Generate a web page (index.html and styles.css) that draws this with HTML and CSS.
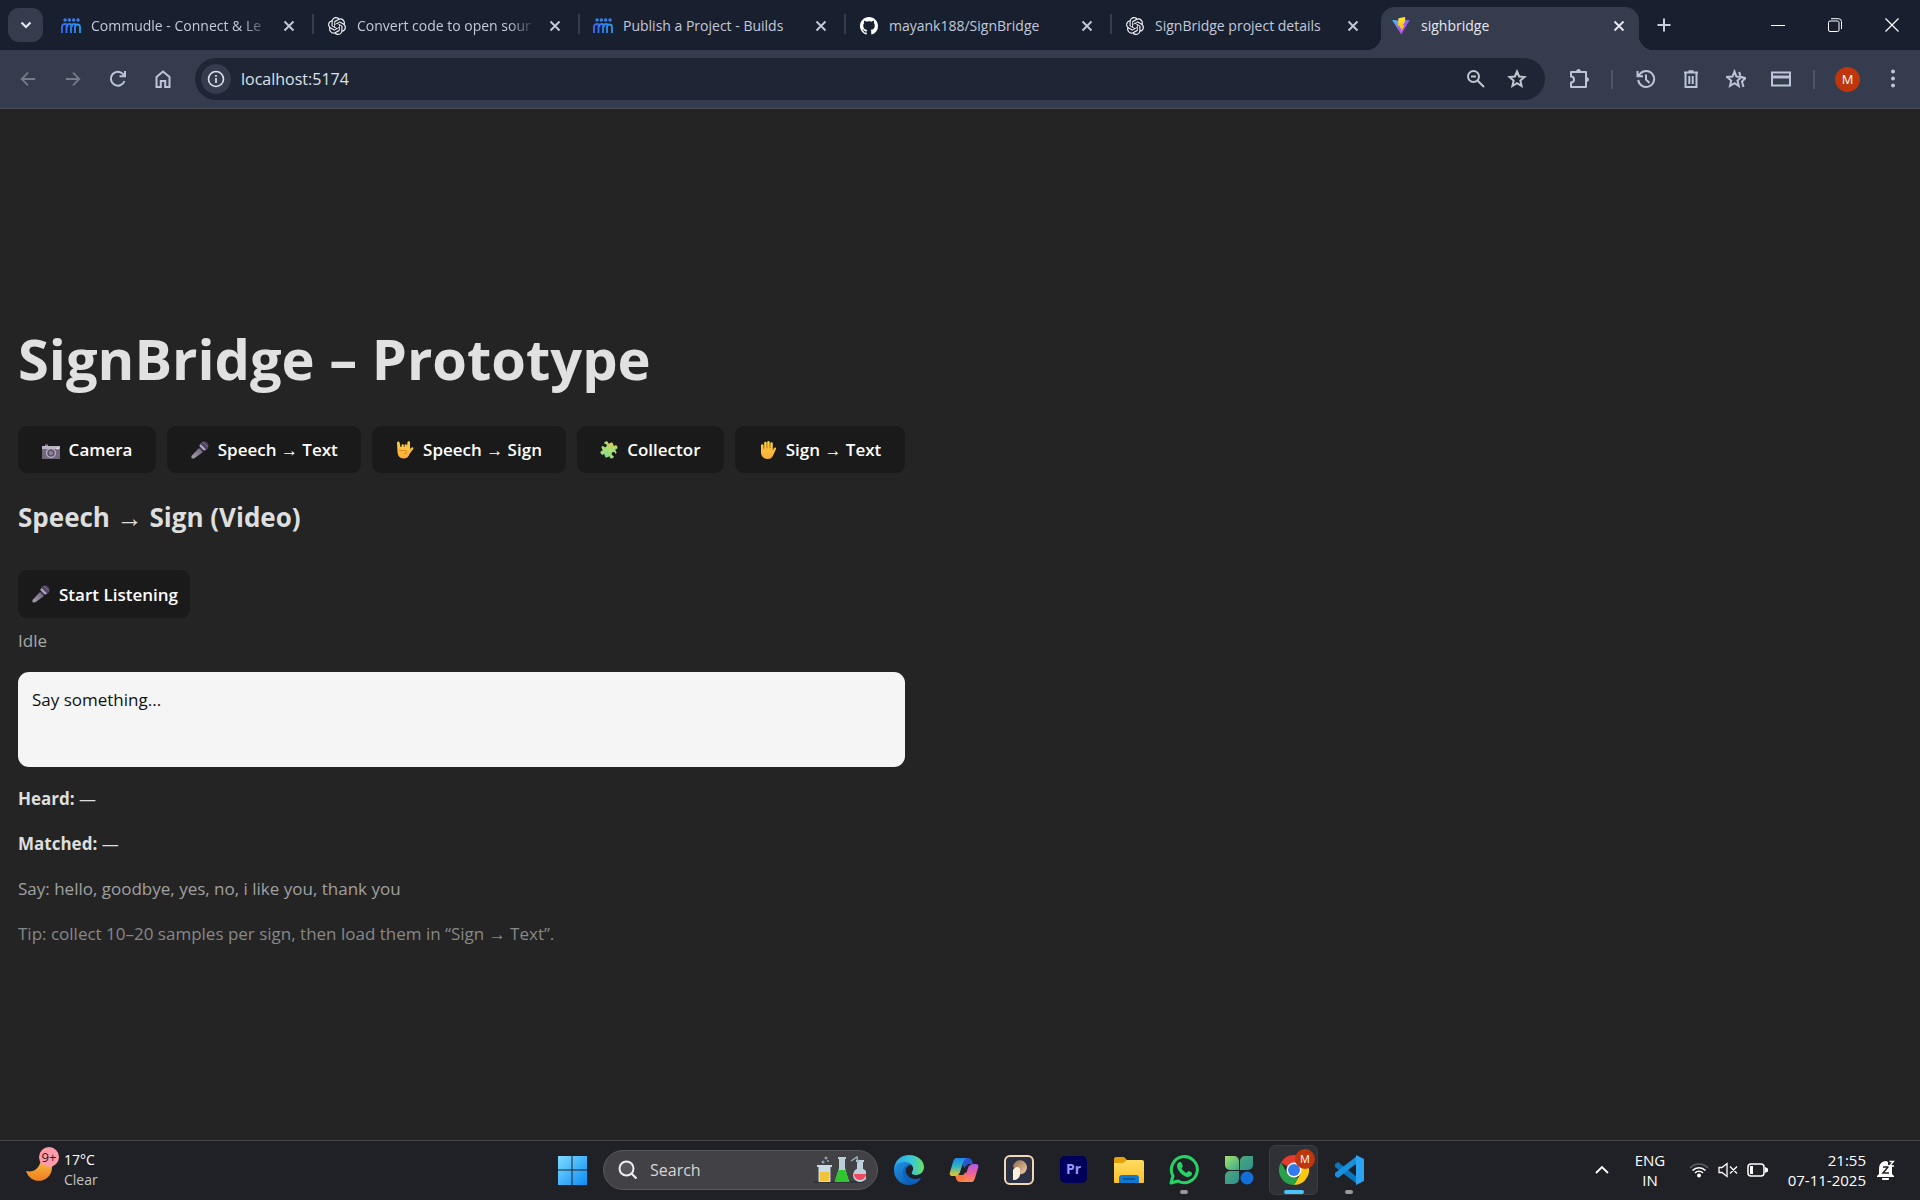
FILE: index.html
```html
<!DOCTYPE html>
<html lang="en">
<head>
<meta charset="utf-8">
<meta name="viewport" content="width=device-width, initial-scale=1">
<title>sighbridge</title>
<link rel="stylesheet" href="styles.css">
</head>
<body>
<svg class="defs" width="0" height="0" aria-hidden="true">
  <defs>
    <linearGradient id="g-people" x1="0" x2="1"><stop offset="0" stop-color="#4468f2"/><stop offset="1" stop-color="#1f9bf0"/></linearGradient>
    <linearGradient id="g-mic" x1="0" y1="1" x2="1" y2="0"><stop offset="0" stop-color="#a9a1ac"/><stop offset="1" stop-color="#6d6078"/></linearGradient>
    <linearGradient id="g-hand" x1="0" y1="0" x2="0" y2="1"><stop offset="0" stop-color="#ffd23c"/><stop offset="1" stop-color="#fbab3a"/></linearGradient>
    <symbol id="people" viewBox="0 0 20 16">
      <g fill="url(#g-people)"><circle cx="4" cy="2" r="1.7"/><circle cx="8.300" cy="2" r="1.700"/><circle cx="12.600" cy="2" r="1.700"/><circle cx="17" cy="2" r="1.700"/></g>
      <path d="M1 15V9a3 3 0 0 1 5.500-1.600M5.500 15V9a3 3 0 0 1 5.500-1.600M10 15V9a3 3 0 0 1 5.500-1.600M14 15V9a2.500 2.500 0 0 1 5 0v6M4.500 6a3 3 0 0 1 2 3M9 6a3 3 0 0 1 2 3" fill="none" stroke="url(#g-people)" stroke-width="1.800"/>
    </symbol>
    <symbol id="gpt" viewBox="0 0 24 24">
      <path fill="#f1f1f4" d="M22.282 9.821a5.985 5.985 0 0 0-.516-4.910 6.046 6.046 0 0 0-6.510-2.900A6.065 6.065 0 0 0 4.981 4.182a5.985 5.985 0 0 0-3.998 2.900 6.046 6.046 0 0 0 .743 7.097 5.980 5.980 0 0 0 .510 4.911 6.051 6.051 0 0 0 6.515 2.900A5.985 5.985 0 0 0 13.260 24a6.056 6.056 0 0 0 5.772-4.206 5.990 5.990 0 0 0 3.998-2.900 6.056 6.056 0 0 0-.748-7.073zM13.260 22.430a4.476 4.476 0 0 1-2.876-1.041l.141-.080 4.779-2.758a.795.795 0 0 0 .393-.681v-6.737l2.020 1.169a.071.071 0 0 1 .038.052v5.583a4.504 4.504 0 0 1-4.495 4.493zM3.600 18.304a4.471 4.471 0 0 1-.535-3.014l.142.085 4.783 2.759a.771.771 0 0 0 .780 0l5.843-3.369v2.332a.080.080 0 0 1-.033.062L9.740 19.950a4.499 4.499 0 0 1-6.140-1.646zM2.340 7.896a4.485 4.485 0 0 1 2.366-1.973V11.600a.766.766 0 0 0 .388.677l5.815 3.354-2.020 1.169a.076.076 0 0 1-.071 0l-4.830-2.787A4.504 4.504 0 0 1 2.340 7.872zm16.597 3.855-5.833-3.387L15.119 7.200a.076.076 0 0 1 .071 0l4.830 2.791a4.494 4.494 0 0 1-.676 8.105v-5.678a.790.790 0 0 0-.407-.667zm2.010-3.023-.141-.085-4.774-2.782a.776.776 0 0 0-.785 0L9.409 9.230V6.897a.066.066 0 0 1 .028-.061l4.830-2.787a4.499 4.499 0 0 1 6.680 4.660zM8.307 12.863l-2.020-1.164a.080.080 0 0 1-.038-.057V6.075a4.499 4.499 0 0 1 7.375-3.454l-.142.080L8.704 5.459a.795.795 0 0 0-.393.681zm1.097-2.365 2.602-1.500 2.607 1.500v2.999l-2.597 1.500-2.607-1.500z"/>
    </symbol>
    <symbol id="cross" viewBox="0 0 12 12"><path d="M1.500 1.500l9 9M10.500 1.500l-9 9" stroke="currentColor" stroke-width="1.900"/></symbol>
    <symbol id="mic" viewBox="0 0 18 18">
      <path fill="url(#g-mic)" d="M8 7l4 4-9 6.500-2.500-.200V15z"/>
      <circle cx="13" cy="5" r="4.500" fill="#51445f"/><path d="M9 4l5 5" stroke="#b9aac9" stroke-width="2"/><path d="M12 1l5 5" stroke="#7a6b8b" stroke-width="1"/>
    </symbol>
  </defs>
</svg>

<header class="browser">
  <div class="tabstrip">
    <button class="tab-search" aria-label="Search tabs"><svg width="12" height="8" viewBox="0 0 12 8"><path d="M1.500 1.500L6 6l4.500-4.500" fill="none" stroke="#e4e7f0" stroke-width="2.200"/></svg></button>
    <div class="tab"><svg class="favicon"><use href="#people"/></svg><span class="tab-title fade">Commudle - Connect &amp; Le</span><button class="tab-close" aria-label="Close tab"><svg><use href="#cross"/></svg></button></div>
    <div class="tab"><svg class="favicon"><use href="#gpt"/></svg><span class="tab-title fade">Convert code to open sour</span><button class="tab-close" aria-label="Close tab"><svg><use href="#cross"/></svg></button></div>
    <div class="tab"><svg class="favicon"><use href="#people"/></svg><span class="tab-title">Publish a Project - Builds</span><button class="tab-close" aria-label="Close tab"><svg><use href="#cross"/></svg></button></div>
    <div class="tab"><svg class="favicon" viewBox="0 0 16 16"><path fill="#fff" d="M8 0C3.580 0 0 3.580 0 8c0 3.540 2.290 6.530 5.470 7.590.400.070.550-.170.550-.380 0-.190-.010-.820-.010-1.490-2.010.370-2.530-.490-2.690-.940-.090-.230-.480-.940-.820-1.130-.280-.150-.680-.520-.010-.530.630-.010 1.080.580 1.230.820.720 1.210 1.870.870 2.330.660.070-.520.280-.870.510-1.070-1.780-.200-3.640-.890-3.640-3.950 0-.870.310-1.590.820-2.150-.080-.200-.360-1.020.080-2.120 0 0 .670-.210 2.200.820.640-.180 1.320-.270 2-.270s1.360.090 2 .270c1.530-1.040 2.200-.820 2.200-.820.440 1.100.160 1.920.080 2.120.510.560.820 1.270.820 2.150 0 3.070-1.870 3.750-3.650 3.950.290.250.540.730.540 1.480 0 1.070-.010 1.930-.010 2.200 0 .210.150.460.550.380A8.010 8.010 0 0 0 16 8c0-4.420-3.580-8-8-8z"/></svg><span class="tab-title">mayank188/SignBridge</span><button class="tab-close" aria-label="Close tab"><svg><use href="#cross"/></svg></button></div>
    <div class="tab"><svg class="favicon"><use href="#gpt"/></svg><span class="tab-title">SignBridge project details</span><button class="tab-close" aria-label="Close tab"><svg><use href="#cross"/></svg></button></div>
    <div class="tab active"><svg class="favicon" viewBox="0 0 32 32"><defs><linearGradient id="v1" x2="1" y2="1"><stop offset="0" stop-color="#41d1ff"/><stop offset=".6" stop-color="#a145f5"/><stop offset="1" stop-color="#bd34fe"/></linearGradient><linearGradient id="v2" x2="0" y2="1"><stop offset="0" stop-color="#ffea3c"/><stop offset="1" stop-color="#ffa800"/></linearGradient></defs><path fill="url(#v1)" d="M.300 5.500l14 1L31.600 5.500 16.500 31.500z"/><path fill="url(#v2)" d="M23 0L11.500 2.300l-.900 14 3.800-.900-.900 5 3-.900-1.700 8.800L23 14.500l-4 .800 4.600-8.800z"/></svg><span class="tab-title">sighbridge</span><button class="tab-close" aria-label="Close tab"><svg><use href="#cross"/></svg></button></div>
    <button class="new-tab" aria-label="New tab"><svg width="14" height="14" viewBox="0 0 14 14"><path d="M7 .500v13M.500 7h13" stroke="#c7cce0" stroke-width="2"/></svg></button>
    <div class="window-controls">
      <button aria-label="Minimize"><svg width="14" height="14" viewBox="0 0 14 14"><path d="M0 7.500h14" stroke="#fff"/></svg></button>
      <button aria-label="Restore"><svg width="14" height="14" viewBox="0 0 14 14"><rect x=".5" y="3" width="10.500" height="10.500" rx="1.500" fill="none" stroke="#fff"/><path d="M3 .700h7.500a3 3 0 0 1 3 3V11" fill="none" stroke="#fff"/></svg></button>
      <button aria-label="Close"><svg width="14" height="14" viewBox="0 0 14 14"><path d="M.500.500l13 13M13.500.500l-13 13" stroke="#fff" stroke-width="1.200"/></svg></button>
    </div>
  </div>

  <div class="toolbar">
    <button class="tool dim" aria-label="Back"><svg viewBox="0 0 20 20"><path d="M18 10H3M10 3l-7 7 7 7"/></svg></button>
    <button class="tool dim" aria-label="Forward"><svg viewBox="0 0 20 20"><path d="M2 10h15M10 3l7 7-7 7"/></svg></button>
    <button class="tool" aria-label="Reload"><svg viewBox="0 0 20 20"><path d="M16.500 12A7 7 0 1 1 15.500 5.500L17 7M17 2v5.200h-5.500"/></svg></button>
    <button class="tool" aria-label="Home"><svg viewBox="0 0 20 20"><path d="M3.500 8v10h4.300v-6h4.400v6h4.300V8L10 2.500z"/></svg></button>
    <div class="omnibox">
      <button class="site-info" aria-label="Site information"><svg width="18" height="18" viewBox="0 0 18 18"><circle cx="9" cy="9" r="7.500" fill="none" stroke="#dfe2ec" stroke-width="1.600"/><path d="M9 8v5M9 5v1.800" stroke="#dfe2ec" stroke-width="1.700"/></svg></button>
      <input class="url" type="text" value="localhost:5174" aria-label="Address">
      <button class="omni-btn" aria-label="Zoom"><svg viewBox="0 0 20 20"><circle cx="7.500" cy="7.500" r="5.500"/><path d="M5 7.500h5M11.500 11.500l6.500 6.500"/></svg></button>
      <button class="omni-btn" aria-label="Bookmark this tab"><svg viewBox="0 0 20 20"><path d="M10 2.500l2.100 5 5.400.500-4.100 3.600 1.200 5.400L10 14.200 5.400 17l1.200-5.400L2.500 8l5.400-.500z"/></svg></button>
    </div>
    <button class="tool" aria-label="Extensions"><svg viewBox="0 0 20 20"><path d="M2 3h15v15H2v-4.500a3 3 0 0 0 0-6z" stroke-linejoin="round"/><path d="M7.500 2.500a2 2 0 0 1 4 0zM17.500 8.500a2 2 0 0 1 0 4z" fill="currentColor" stroke-width="1"/></svg></button>
    <span class="divider"></span>
    <button class="tool" aria-label="History"><svg viewBox="0 0 20 20"><path d="M2.200 11A8 8 0 1 0 4 4.800L2 7M1.500 2v5.300H7M10 5.500v5l3.500 3.500"/></svg></button>
    <button class="tool" aria-label="Delete browsing data"><svg viewBox="0 0 20 20"><path d="M3 3.500h14M7.500 2.200h5M4.500 4v14h11V4M8.300 7v8M11.700 7v8"/></svg></button>
    <button class="tool" aria-label="Bookmarks"><svg viewBox="0 0 20 20"><path d="M8.500 2.500l1.900 5 5.100.500-4 3.600 1.300 5.400-4.300-2.800L4 17l1.200-5.400L1 8l5.500-.500zM13 3l1.500 3.500M16 8.500l3.500.500-3.500 3.500 1.500 5.500"/></svg></button>
    <button class="tool" aria-label="Payment methods"><svg viewBox="0 0 20 20"><path d="M1 3.500h18v13H1z"/><path d="M1 8h18" stroke-width="3"/></svg></button>
    <span class="divider"></span>
    <button class="tool" aria-label="Profile"><span class="avatar">M</span></button>
    <button class="tool" aria-label="Menu"><svg viewBox="0 0 20 20"><g fill="currentColor" stroke="none"><circle cx="10" cy="2.500" r="2"/><circle cx="10" cy="9.500" r="2"/><circle cx="10" cy="16.500" r="2"/></g></svg></button>
  </div>
</header>

<main class="page">
  <div class="app">
    <h1>SignBridge – Prototype</h1>
    <nav class="modes">
      <button class="btn"><svg class="emoji" viewBox="0 0 18 18"><path fill="#bcb3c4" d="M0 5h18v4H0z"/><path fill="#736879" d="M0 8h18v10H0z"/><path fill="#8e8398" d="M3 3.500h3V5H3z"/><circle cx="9" cy="12" r="5" fill="#c1b8ca"/><circle cx="9" cy="12" r="3.800" fill="#5b5168"/><circle cx="9" cy="12" r="2.200" fill="#8a7e98"/><circle cx="15.500" cy="7.500" r="1" fill="#eee"/></svg>Camera</button>
      <button class="btn"><svg class="emoji"><use href="#mic"/></svg>Speech → Text</button>
      <button class="btn"><svg class="emoji" viewBox="0 0 18 18"><path fill="url(#g-hand)" d="M1 2a1.300 1.300 0 0 1 2.600-.300L4.500 6h1V4.500a1.200 1.200 0 0 1 2.400 0V6h.600V4.500a1.200 1.200 0 0 1 2.400 0V6l.600-4.500a1.200 1.200 0 0 1 2.500.100V8l1.600-1.500c1-1 2.400.400 1.600 1.500L13.500 13c-1 3-3 4.500-6 4.500C3.500 17.500 1.500 14 1.500 11z"/><path d="M3.500 9.500h6.500a2 2 0 0 1 0 3H8" stroke="#d98b24" fill="none"/></svg>Speech → Sign</button>
      <button class="btn"><svg class="emoji" viewBox="0 0 18 18"><defs><linearGradient id="g-puz" x1="1" y1="0" x2="0" y2="1"><stop offset="0" stop-color="#e5c84a"/><stop offset=".5" stop-color="#a6df79"/><stop offset="1" stop-color="#7ed98b"/></linearGradient></defs><g transform="rotate(-22 9 9)" fill="url(#g-puz)"><rect x="3" y="3" width="12" height="12" rx="1"/><circle cx="9" cy="1.800" r="2"/><circle cx="16" cy="9" r="2"/><circle cx="2" cy="9" r="2"/><circle cx="9" cy="16" r="2"/></g><g fill="#1a1a1a"><circle cx="5" cy="4.500" r="1.700"/><circle cx="13.500" cy="12.800" r="1.900"/></g></svg>Collector</button>
      <button class="btn"><svg class="emoji" viewBox="0 0 18 18"><path fill="url(#g-hand)" d="M2 4.500a1.200 1.200 0 0 1 2.400 0l.100 3h.700V2a1.200 1.200 0 0 1 2.500 0v5h.500V1.200a1.200 1.200 0 0 1 2.500 0V7h.600V2.500a1.200 1.200 0 0 1 2.500 0V9.500L15 7c.900-1.200 2.500-.400 2 1L14 14.500C13 17 11.500 18 8.500 18 5 18 2 15.500 2 11.500z"/><path d="M4.800 4v5M8 3v5.500M11 3.500v5" stroke="#e99b2b" stroke-width=".8"/></svg>Sign → Text</button>
    </nav>
    <h2>Speech → Sign (Video)</h2>
    <button class="btn listen"><svg class="emoji"><use href="#mic"/></svg>Start Listening</button>
    <p class="status">Idle</p>
    <div class="transcript">Say something...</div>
    <p><strong>Heard:</strong> —</p>
    <p><strong>Matched:</strong> —</p>
    <p class="hint">Say: hello, goodbye, yes, no, i like you, thank you</p>
    <p class="tip">Tip: collect 10–20 samples per sign, then load them in “Sign → Text”.</p>
  </div>
</main>

<footer class="taskbar">
  <button class="weather">
    <span class="weather-icon"><svg width="30" height="30" viewBox="0 0 30 30"><defs><linearGradient id="moon" x2="0" y2="1"><stop offset="0" stop-color="#f8c444"/><stop offset="1" stop-color="#f07c1e"/></linearGradient></defs><path fill="url(#moon)" d="M1 16c7 2 14-2 15-12 8-3 12 3 11 9-1 15-21 18-26 3z"/></svg><span class="badge">9+</span></span>
    <span class="weather-text"><span>17°C</span><span class="muted">Clear</span></span>
  </button>

  <div class="dock">
    <button class="app-icon" aria-label="Start"><svg viewBox="0 0 30 30"><defs><linearGradient id="win" x2="1" y2="1"><stop offset="0" stop-color="#7fdcff"/><stop offset="1" stop-color="#0a8cf5"/></linearGradient></defs><path fill="url(#win)" d="M1 1h13.500v13.500H1zM15.500 1H30v13.500H15.500zM1 15.500h13.500V30H1zM15.500 15.500H30V30H15.500z"/></svg></button>
    <label class="search">
      <svg width="20" height="20" viewBox="0 0 20 20"><circle cx="8.500" cy="8.500" r="7" fill="#55555c" stroke="#eee" stroke-width="2"/><path d="M13.500 13.500l5 5" stroke="#eee" stroke-width="2.200"/></svg>
      <input type="text" value="Search" aria-label="Search">
      <svg width="52" height="28" viewBox="0 0 52 28">
        <path d="M0 26h50" stroke="#303138" stroke-width="2"/>
        <path fill="#c9dce6" d="M3 9h15v2h-1.500v15h-12V11H3z"/><path fill="#f2c23a" d="M6 16h9v9H6z"/><circle cx="9" cy="6" r="1.500" fill="#8ba4b4"/><circle cx="12" cy="2" r="1.500" fill="#8ba4b4"/><circle cx="14" cy="5" r="1" fill="#8ba4b4"/>
        <path fill="#b9ced8" d="M24 1h8v2h-1v9l4 14H21l4-14V3h-1z"/><path fill="#2fc62f" d="M24.500 14h7L35.500 26h-15z"/>
        <path fill="#bcd0dc" d="M42 4h8v2h-1v7h-6V6h-1z"/><path d="M37 5l6-4 1 6" fill="none" stroke="#9ab0be" stroke-width="1.500"/><circle cx="46" cy="19" r="7" fill="#bcd0dc"/><path fill="#f0485c" d="M40 18h12a6 6 0 0 1-12 0z"/>
      </svg>
    </label>
    <button class="app-icon" aria-label="Edge"><svg viewBox="0 0 30 30"><defs><linearGradient id="e1" x2="1"><stop offset="0" stop-color="#2aa5ea"/><stop offset=".6" stop-color="#38c9d6"/><stop offset="1" stop-color="#6be05a"/></linearGradient><linearGradient id="e2" x2="1" y2="1"><stop offset="0" stop-color="#1f95e6"/><stop offset="1" stop-color="#0b4aa0"/></linearGradient></defs><path fill="url(#e1)" d="M0 14C1 5 7 0 15 0c9 0 15 6 15 12 0 5-4 8-8 8-3 0-5-1-4-3 3-4 0-9-6-9-7 0-10 4-12 6z"/><path fill="url(#e2)" d="M0 15c0-5 5-8 10-8 4 0 6 1 7 3-6 0-6 5-5 8 2 5 8 8 15 5C24 28 20 30 15 30 7 30 0 24 0 15z"/><path fill="#0e62bb" d="M17 10c-5-1-8 3-8 8 0 6 4 10 9 11 4-1 7-3 9-6-8 3-14-1-15-5-1-4 1-7 5-8z"/></svg></button>
    <button class="app-icon" aria-label="Copilot"><svg viewBox="0 0 30 30"><defs><linearGradient id="c1" x2="0" y2="1"><stop offset="0" stop-color="#1f86ea"/><stop offset=".45" stop-color="#2bb5c8"/><stop offset="1" stop-color="#f4c723"/></linearGradient><linearGradient id="c2" x2="0" y2="1"><stop offset="0" stop-color="#a95bf0"/><stop offset=".5" stop-color="#f0609c"/><stop offset="1" stop-color="#ff8a45"/></linearGradient></defs><path fill="#2856d0" d="M11 3h8c3 0 4 2 5 6h-5l-4 4z"/><path fill="#f5793f" d="M19 27h-8c-3 0-4-3-5-7h8l3-3z"/><path fill="url(#c1)" d="M7 3h11c-3 1-4 4-5 8l-2 6c-1 3-3 4-6 4H3c-2 0-3-2-2-4L4 7c1-3 2-4 3-4z"/><path fill="url(#c2)" d="M23 27H12c3-1 4-4 5-8l2-6c1-3 3-4 6-4h2c2 0 3 2 2 4l-3 10c-1 3-2 4-3 4z"/></svg></button>
    <button class="app-icon" aria-label="Phone app"><svg viewBox="0 0 30 30"><defs><linearGradient id="p1" x2="1" y2="1"><stop offset="0" stop-color="#8c6a50"/><stop offset="1" stop-color="#f3cfa4"/></linearGradient></defs><rect x="1" y="1" width="28" height="28" rx="5" fill="#2b3142" stroke="#f3d6b5" stroke-width="2"/><path fill="url(#p1)" d="M9 12a7 7 0 1 1 9 7c-3 1-4-1-3-4z"/><path fill="#fff0dc" d="M9 25V15c2-4 7-4 7 0v4c0 4-3 6-7 6z"/></svg></button>
    <button class="app-icon" aria-label="Premiere Pro"><span class="premiere">Pr</span></button>
    <button class="app-icon" aria-label="File Explorer"><svg viewBox="0 0 30 30"><defs><linearGradient id="f1" x2="0" y2="1"><stop offset="0" stop-color="#ffdc62"/><stop offset="1" stop-color="#fcbf28"/></linearGradient></defs><path fill="#e3a109" d="M0 4a2 2 0 0 1 2-2h8l3 3v5H0z"/><path fill="url(#f1)" d="M0 8h9l4-3h15a2 2 0 0 1 2 2v20a1 1 0 0 1-1 1H1a1 1 0 0 1-1-1z"/><path fill="#1178cf" d="M5 28v-5a3 3 0 0 1 3-3h14a3 3 0 0 1 3 3v5z"/><path d="M9 24h12" stroke="#0b4d91" stroke-width="1.500"/></svg></button>
    <button class="app-icon running" aria-label="WhatsApp"><svg viewBox="0 0 30 30"><path d="M2 28l2-7A13 13 0 1 1 9 26z" fill="none" stroke="#26d367" stroke-width="3" stroke-linejoin="round"/><path fill="#26d367" d="M8 11c0-3 2-4 3-4 1 0 1.500.500 2 2l.800 2c.200 1-1.500 2-1.300 2.500 1.500 2.500 3 3.500 5 4.300.600.200 1.500-2 2.300-1.800l3 1.500c.700.400 0 4.500-4 4.500C14 22 8 15 8 11z"/></svg></button>
    <button class="app-icon" aria-label="Clover app"><svg viewBox="0 0 30 30"><defs><linearGradient id="k1" x2="1" y2="1"><stop offset="0" stop-color="#a4e26a"/><stop offset="1" stop-color="#38a98d"/></linearGradient><linearGradient id="k2" x2="1" y2="1"><stop offset="0" stop-color="#59b96c"/><stop offset="1" stop-color="#24809e"/></linearGradient></defs><path fill="url(#k1)" d="M1 1h9a5 5 0 0 1 5 5v9H6a5 5 0 0 1-5-5z"/><path fill="url(#k2)" d="M29 1v9a5 5 0 0 1-5 5h-8V6a5 5 0 0 1 5-5zM1 29v-8a5 5 0 0 1 5-5h9v8a5 5 0 0 1-5 5z"/><circle cx="23" cy="23" r="6.500" fill="#126fd8"/></svg></button>
    <button class="app-icon current" aria-label="Chrome"><svg viewBox="0 0 30 30"><path fill="#e33b2e" d="M15 15L2 7.500A15 15 0 0 1 28 7.500H15z"/><path fill="#fcc70f" d="M15 7.500h13A15 15 0 0 1 15 30l6.500-11.200z"/><path fill="#27a24a" d="M2 7.500l6.500 11.300L15 22.500h4.300L15 30A15 15 0 0 1 2 7.500z"/><circle cx="15" cy="15" r="7.500" fill="#fff"/><circle cx="15" cy="15" r="6" fill="#3079ee"/></svg><span class="profile-badge">M</span></button>
    <button class="app-icon running" aria-label="Visual Studio Code"><svg viewBox="0 0 30 30"><path fill="#0a76bd" d="M1 9l3-2 19 15v7L1 12z"/><path fill="#1890dc" d="M1 21l3 2L23 8V1L1 18z"/><path fill="#2ba4f3" d="M22 0l8 4v22l-8 4z"/></svg></button>
  </div>

  <div class="tray">
    <button class="tray-btn" aria-label="Show hidden icons"><svg width="14" height="9" viewBox="0 0 14 9"><path d="M1 8l6-6 6 6" fill="none" stroke="#fff" stroke-width="1.800"/></svg></button>
    <button class="lang"><span>ENG</span><span>IN</span></button>
    <button class="quick" aria-label="Network, sound and battery">
      <svg width="20" height="16" viewBox="0 0 20 16" fill="none" stroke="#fff" stroke-width="1.500"><path d="M1 6a12 12 0 0 1 18 0" stroke="#5d5e63"/><path d="M3.500 8.500a9 9 0 0 1 13 0M6 11a5.500 5.500 0 0 1 8 0"/><circle cx="10" cy="13.500" r="1.200" fill="#fff"/></svg>
      <svg width="20" height="16" viewBox="0 0 20 16" fill="none" stroke="#fff" stroke-width="1.300"><path d="M1 5.500h3L9 1.500v13L4 10.500H1zM12 4.500l7 7M19 4.500l-7 7"/></svg>
      <svg width="21" height="16" viewBox="0 0 21 16"><rect x="1" y="2" width="16" height="12" rx="3" fill="none" stroke="#fff" stroke-width="1.500"/><path fill="#fff" d="M3 4h3v8H3zM18 5l3 1.500v3L18 11z"/></svg>
    </button>
    <button class="clock"><span>21:55</span><span>07-11-2025</span></button>
    <button class="bell" aria-label="Do not disturb"><svg width="18" height="20" viewBox="0 0 18 20"><path fill="#fff" d="M2 14V8a7 7 0 0 1 7-7l2 1v3h4v9l2 2v1H0v-1zM5 18h7a3.500 3.500 0 0 1-7 0z"/><path d="M6 7h5l-5 6h6" fill="none" stroke="#202126" stroke-width="1.500"/><path d="M12.500 1.500h4L12.500 6H17" fill="none" stroke="#fff" stroke-width="1.300"/></svg></button>
  </div>
</footer>
</body>
</html>
```

FILE: styles.css
```css
* { box-sizing: border-box; }

body {
  margin: 0;
  min-height: 100vh;
  display: flex;
  flex-direction: column;
  background: #242424;
  color: #dedede;
  font: 17px/27px "Open Sans", "Liberation Sans", sans-serif;
}

button, input { font: inherit; color: inherit; border: 0; background: none; padding: 0; margin: 0; }
button { display: flex; align-items: center; justify-content: center; cursor: pointer; }
svg { display: block; flex: none; }
.defs { position: absolute; }

/* Tab strip */
.tabstrip {
  display: flex;
  height: 50px;
  padding-left: 8px;
  background: #182030;
  color: #c3c8da;
  font-size: 14px;
  line-height: 20px;
}
.tab-search { width: 35px; height: 34px; margin: 8px 8px 0 0; border-radius: 11px; background: #343c4d; }
.tab {
  position: relative;
  display: flex;
  flex: 0 1 258px;
  align-items: center;
  min-width: 0;
  height: 43px;
  margin: 7px 8px 0 0;
  padding: 0 10px 6px;
}
.tab::after { content: ""; position: absolute; right: -5px; top: 7px; width: 2px; height: 20px; background: #343c4d; }
.tab:nth-child(6)::after { display: none; }
.favicon { width: 20px; height: 18px; margin-right: 10px; }
.tab-title { flex: 1; overflow: hidden; white-space: nowrap; }
.fade { -webkit-mask-image: linear-gradient(90deg, #000 84%, transparent); mask-image: linear-gradient(90deg, #000 84%, transparent); }
.tab-close { width: 20px; height: 20px; margin-left: 8px; }
.tab-close svg { width: 12px; height: 12px; }
.active { border-radius: 14px 14px 0 0; background: #343c4d; color: #e6e8f0; }
.active::before, .active::after {
  content: "";
  position: absolute;
  top: auto;
  bottom: 0;
  width: 14px;
  height: 14px;
}
.active::before { left: -14px; background: radial-gradient(circle at 0 0, transparent 14px, #343c4d 14px); }
.active::after { right: -14px; background: radial-gradient(circle at 100% 0, transparent 14px, #343c4d 14px); }
.new-tab { width: 34px; height: 50px; }
.window-controls { display: flex; margin-left: auto; }
.window-controls button { width: 57px; height: 50px; }

/* Toolbar */
.toolbar {
  display: flex;
  align-items: center;
  height: 59px;
  padding: 0 5px;
  border-bottom: 1px solid #484c54;
  background: #343c4d;
  color: #bcc3db;
}
.tool { width: 45px; height: 42px; }
.tool svg, .omni-btn svg { width: 20px; height: 20px; fill: none; stroke: currentColor; stroke-width: 2; }
.dim { color: #757b8a; }
.dim svg { width: 18px; height: 18px; }
.omnibox {
  display: flex;
  flex: 1;
  align-items: center;
  height: 42px;
  margin: 0 11px 0 10px;
  padding: 0 8px 0 6px;
  border-radius: 21px;
  background: #1e2636;
}
.site-info { width: 30px; height: 30px; border-radius: 15px; background: #343c4d; }
.url { flex: 1; min-width: 0; margin-left: 10px; color: #dfe1e8; font-size: 16px; }
.omni-btn { width: 41px; height: 42px; color: #c4c6cf; }
.divider { width: 2px; height: 19px; margin: 0 10px; background: #4d5568; }
.avatar { width: 25px; height: 25px; border-radius: 50%; background: #bf360c; color: #fff; font-size: 13px; line-height: 25px; }

/* Page */
.page { display: flex; flex: 1; align-items: center; padding: 0 18px; }
.app { width: 100%; max-width: 887px; }
h1 { margin: 42px 0 36px; color: #e1e1e1; font-size: 56px; line-height: 64px; font-weight: 700; }
h2 { margin: 24px 0 32px; font-size: 26px; line-height: 41px; font-weight: 700; }
p { margin: 18px 0; }
.modes { display: flex; gap: 11px; }
.btn { height: 47px; border-radius: 9px; background: #1a1a1a; color: #fff; font-weight: 600; white-space: nowrap; }
.modes .btn { flex: 1 1 auto; }
.emoji { width: 18px; height: 18px; margin-right: 9px; }
.listen { height: 48px; padding: 0 12px 0 14px; }
.status { margin-top: 9px; color: #a8a8a8; }
.transcript { min-height: 95px; padding: 14px; border-radius: 11px; background: #f5f5f5; color: #111; }
.hint { color: #a0a0a0; }
.tip { color: #888; }

/* Taskbar */
.taskbar {
  display: grid;
  grid-template-columns: 1fr auto 1fr;
  height: 60px;
  padding-bottom: 2px;
  border-top: 1px solid #484848;
  background: #202126;
  color: #fff;
  font-size: 14px;
  line-height: 20px;
}
.weather { justify-self: start; padding-left: 25px; text-align: left; }
.weather-icon { position: relative; margin-right: 9px; }
.badge { position: absolute; top: -8px; left: 14px; width: 20px; height: 20px; border-radius: 50%; background: #ff9bab; color: #222; font-size: 13px; text-align: center; }
.weather-text, .lang, .clock { display: flex; flex-direction: column; }
.muted { color: #c3c3c3; }
.dock { display: flex; align-items: center; }
.app-icon { position: relative; width: 55px; height: 50px; }
.app-icon svg { width: 30px; height: 30px; }
.search { display: flex; align-items: center; width: 275px; height: 40px; margin: 0 3px 0 4px; padding: 0 11px 0 14px; border: 1px solid #57585d; border-radius: 20px; background: #414146; }
.search input { flex: 1; min-width: 0; margin-left: 12px; color: #d5d5d7; font-size: 16px; }
.premiere { width: 27px; height: 27px; border-radius: 5px; background: #00005b; color: #9999ff; font-weight: 700; line-height: 26px; }
.running::after, .current::after { content: ""; position: absolute; bottom: 1px; left: 24px; width: 8px; height: 4px; border-radius: 2px; background: #96979a; }
.current::before { content: ""; position: absolute; inset: 0 3px; z-index: -1; border: 1px solid #3b3c41; border-radius: 6px; background: #303136; }
.current { z-index: 0; }
.current::after { left: 18px; width: 20px; background: #4cc2ff; }
.profile-badge { position: absolute; top: 4px; right: 6px; width: 20px; height: 20px; border-radius: 50%; background: #bf360c; font-size: 11px; line-height: 20px; }
.tray { display: flex; justify-content: flex-end; padding-right: 25px; font-size: 15px; }
.tray-btn { width: 34px; }
.lang { width: 62px; }
.quick { width: 95px; gap: 9px; }
.clock { align-items: flex-end; width: 90px; }
.bell { margin-left: 11px; }
```
